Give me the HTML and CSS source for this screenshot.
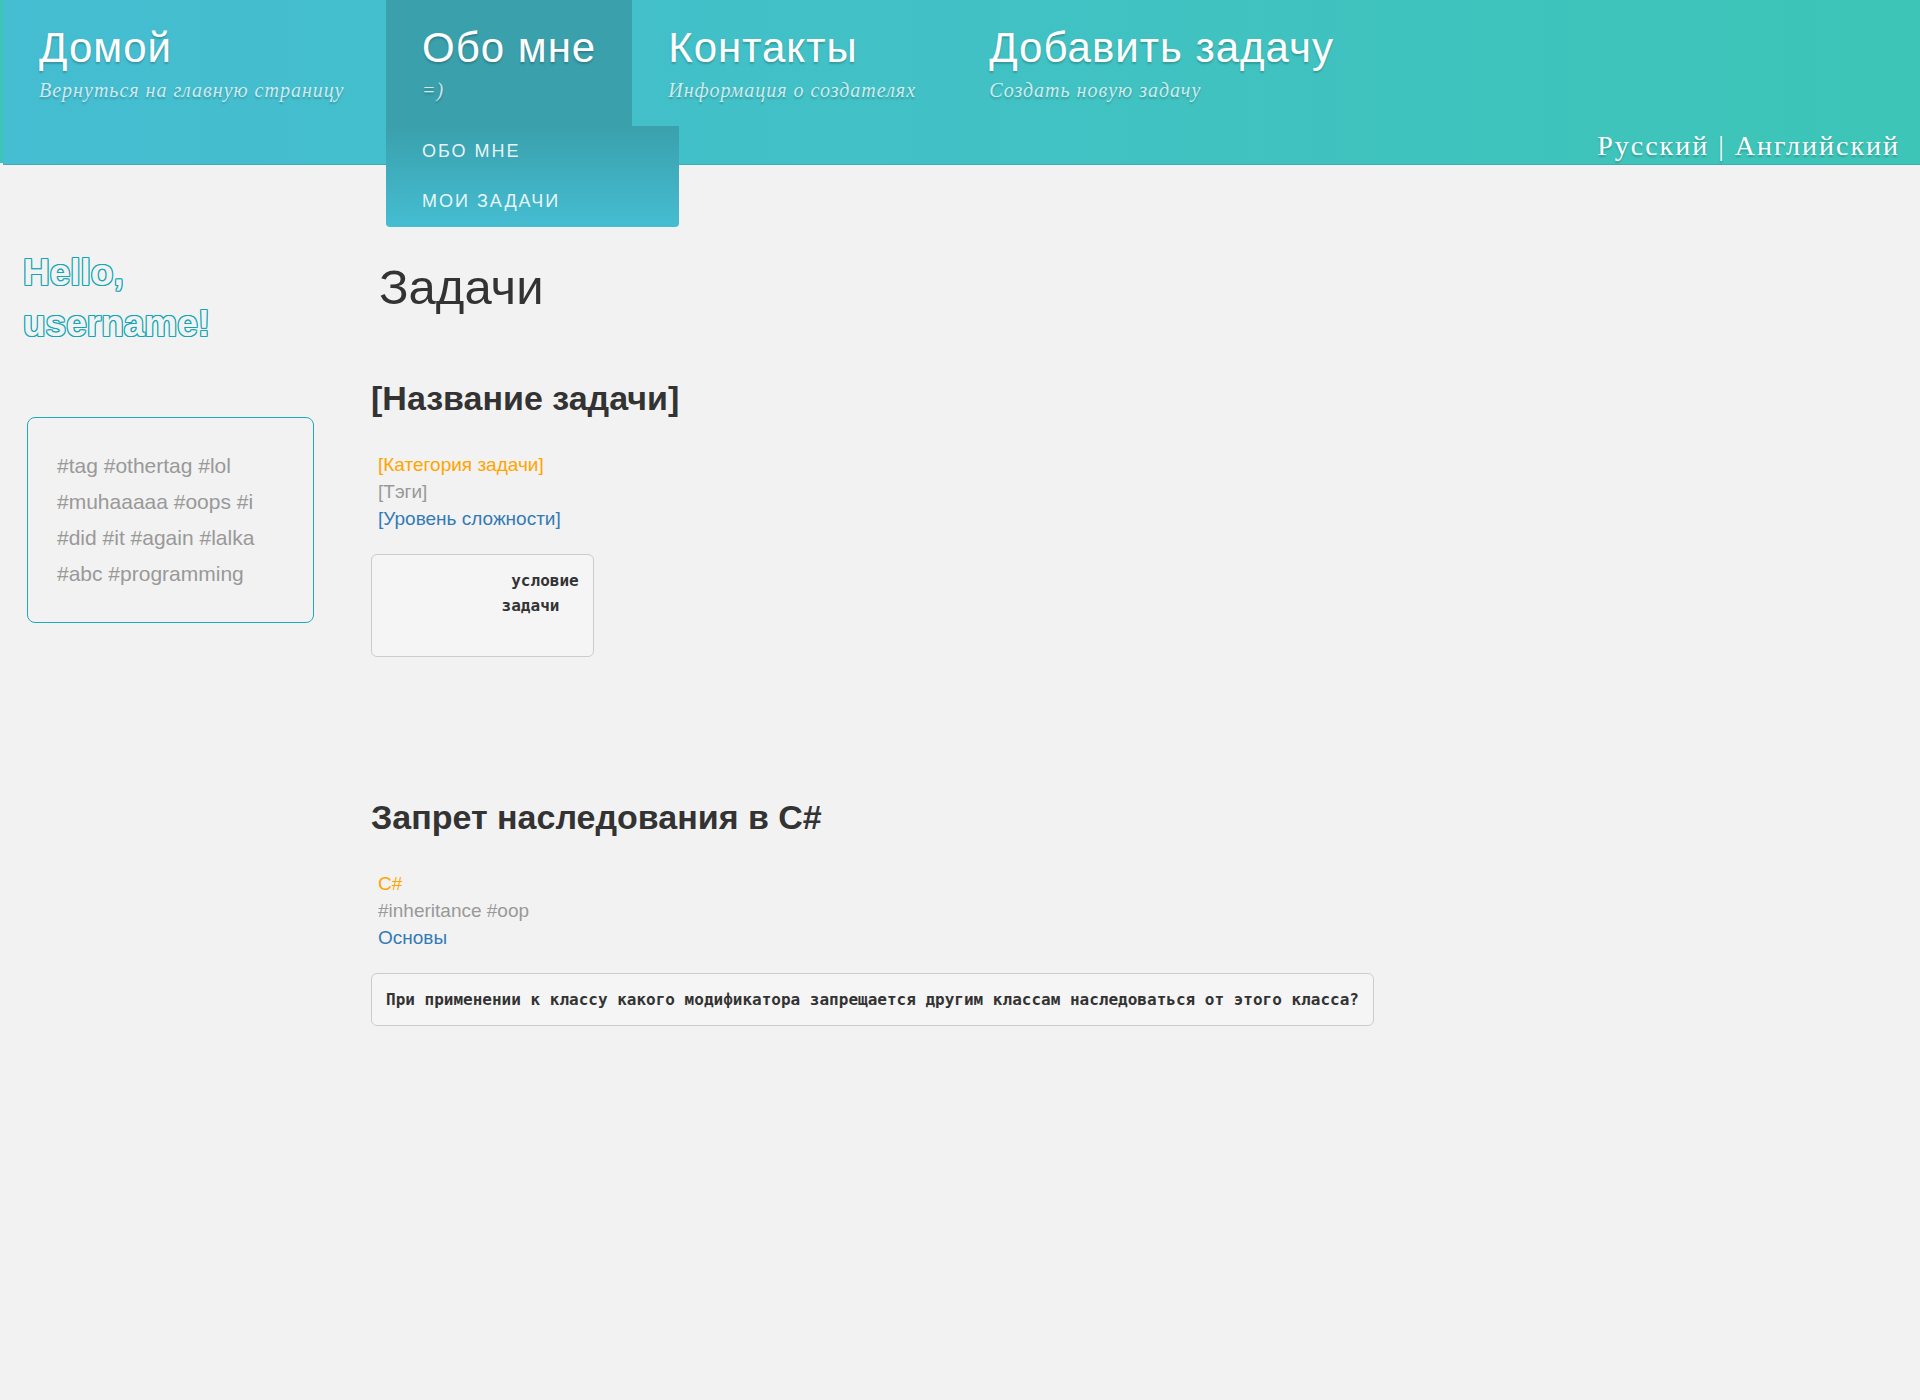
FILE: index.html
```html
<!DOCTYPE html>
<html lang="ru">
<head>
<meta charset="utf-8">
<title>Задачи</title>
<link rel="stylesheet" href="styles.css">
</head>
<body>
<header class="header">
  <nav class="nav">
    <ul class="menu">
      <li class="menu-item home"><a class="menu-link" href="#"><span class="menu-title">Домой</span><span class="menu-sub">Вернуться на главную страницу</span></a></li>
      <li class="menu-item open"><a class="menu-link" href="#"><span class="menu-title">Обо мне</span><span class="menu-sub">=)</span></a>
        <ul class="submenu">
          <li><a class="submenu-link" href="#">Обо мне</a></li>
          <li><a class="submenu-link" href="#">Мои задачи</a></li>
        </ul>
      </li>
      <li class="menu-item contacts"><a class="menu-link" href="#"><span class="menu-title">Контакты</span><span class="menu-sub">Информация о создателях</span></a></li>
      <li class="menu-item"><a class="menu-link" href="#"><span class="menu-title">Добавить задачу</span><span class="menu-sub">Создать новую задачу</span></a></li>
    </ul>
    <div class="languages"><a href="#">Русский</a> | <a href="#">Английский</a></div>
  </nav>
</header>
<div class="layout">
  <aside class="sidebar">
    <h2 class="greeting">Hello, username!</h2>
    <div class="tags">#tag #othertag #lol #muhaaaaa #oops #i #did #it #again #lalka #abc #programming</div>
  </aside>
  <main class="content">
    <h1 class="page-title">Задачи</h1>
    <article class="task">
      <h2 class="task-title">[Название задачи]</h2>
      <div class="meta">
        <a class="category" href="#">[Категория задачи]</a>
        <span class="task-tags">[Тэги]</span>
        <a class="level" href="#">[Уровень сложности]</a>
      </div>
      <pre class="condition">             условие
            задачи
 </pre>
    </article>
    <article class="task">
      <h2 class="task-title">Запрет наследования в C#</h2>
      <div class="meta">
        <a class="category" href="#">C#</a>
        <span class="task-tags">#inheritance #oop</span>
        <a class="level" href="#">Основы</a>
      </div>
      <pre class="condition">При применении к классу какого модификатора запрещается другим классам наследоваться от этого класса?</pre>
    </article>
  </main>
</div>
</body>
</html>
```
FILE: styles.css
```css
* { box-sizing: border-box; }
body {
  margin: 0;
  background: #f2f2f2;
  color: #333;
  font-family: "Liberation Sans", Arial, sans-serif;
  font-size: 19px;
}
a { color: inherit; text-decoration: none; }
ul { list-style: none; margin: 0; padding: 0; }
h1, h2, pre { margin: 0; }

.header {
  padding-left: 3px;
  background: linear-gradient(#3dc5b5, #3dc5b5) left top / 3px 163px no-repeat;
}
.nav {
  display: flex;
  justify-content: space-between;
  min-height: 165px;
  border-bottom: 1px solid #3dacb4;
  background: linear-gradient(to right, #45bdd2, #3dc5b7);
  color: #fff;
  text-shadow: 0 2px 2px rgba(0, 0, 0, .2);
}
.menu { display: flex; align-items: flex-start; }
.menu-item { position: relative; white-space: nowrap; }
.home { min-width: 383px; }
.contacts { min-width: 321px; }
.menu-link {
  display: flex;
  flex-direction: column;
  height: 126px;
  padding: 23px 36px 0;
}
.menu-title { font-size: 42px; line-height: 50px; letter-spacing: 1px; }
.menu-sub {
  color: rgba(255, 255, 255, .75);
  font-family: "Liberation Serif", serif;
  font-size: 20px;
  font-style: italic;
  line-height: 34px;
  letter-spacing: 1px;
}
.open { background: #3aa0ac; }
.submenu {
  position: absolute;
  top: 100%;
  left: 0;
  width: 293px;
  padding-bottom: 1px;
  border-radius: 0 0 4px 4px;
  background: linear-gradient(#3aa0ac, #45bdd2);
  text-shadow: none;
}
.submenu-link {
  display: block;
  padding: 0 36px;
  font-size: 18px;
  line-height: 50px;
  letter-spacing: 2px;
  text-transform: uppercase;
  color: rgba(255, 255, 255, .9);
}
.languages {
  align-self: flex-end;
  padding-right: 20px;
  font-family: "Liberation Serif", serif;
  font-size: 28px;
  line-height: 36px;
  letter-spacing: 2px;
}

.layout { display: flex; }
.sidebar { flex: none; width: 371px; padding: 82px 57px 0 23px; }
.greeting {
  color: #f2f2f2;
  font-size: 37px;
  line-height: 51px;
  text-shadow:
    -1px -1px 0 #14a6b5, 1px -1px 0 #14a6b5, -1px 1px 0 #14a6b5, 1px 1px 0 #14a6b5,
    0 -1px 0 #14a6b5, 0 1px 0 #14a6b5, -1px 0 0 #14a6b5, 1px 0 0 #14a6b5;
}
.tags {
  margin: 68px 0 0 4px;
  padding: 30px 29px;
  border: 1px solid #1eabb9;
  border-radius: 8px;
  color: #999;
  font-size: 21px;
  line-height: 36px;
}
.content { flex: 1; padding-top: 87px; }
.page-title {
  padding-left: 8px;
  font-size: 49px;
  font-weight: 400;
  line-height: 70px;
}
.task { margin-bottom: 84px; padding-top: 51px; }
.task-title { font-size: 34px; line-height: 50px; }
.meta {
  display: flex;
  flex-direction: column;
  align-items: flex-start;
  padding: 28px 7px 0;
  line-height: 27px;
}
.category { color: orange; }
.task-tags { color: #999; }
.level { color: #337ab7; }
.condition {
  width: fit-content;
  margin-top: 22px;
  padding: 13px 14px;
  border: 1px solid #ccc;
  border-radius: 6px;
  background: #f5f5f5;
  font-family: "DejaVu Sans Mono", monospace;
  font-size: 16px;
  font-weight: 700;
  line-height: 25px;
}
```
